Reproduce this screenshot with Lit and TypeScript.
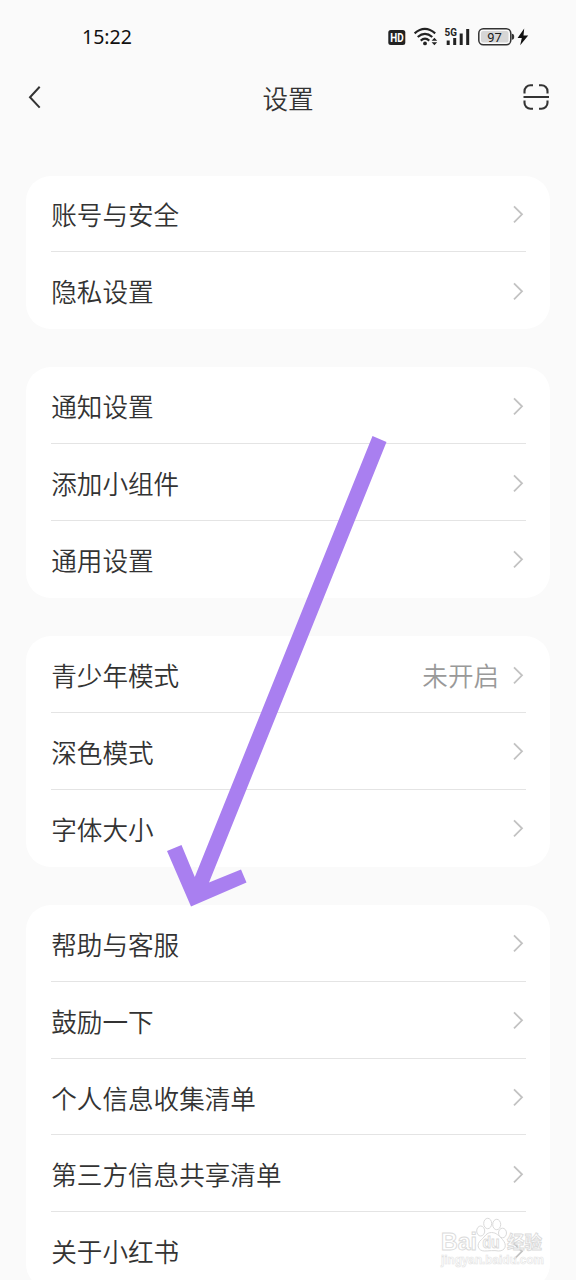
import { LitElement, html, css, svg, nothing } from "lit";
import { customElement, property } from "lit/decorators.js";

interface Item {
  label: string;
  value?: string;
}

const GROUPS: Item[][] = [
  [{ label: "账号与安全" }, { label: "隐私设置" }],
  [{ label: "通知设置" }, { label: "添加小组件" }, { label: "通用设置" }],
  [{ label: "青少年模式", value: "未开启" }, { label: "深色模式" }, { label: "字体大小" }],
  [
    { label: "帮助与客服" },
    { label: "鼓励一下" },
    { label: "个人信息收集清单" },
    { label: "第三方信息共享清单" },
    { label: "关于小红书" },
  ],
];

@customElement("status-bar")
class StatusBar extends LitElement {
  static styles = css`
    :host {
      display: flex;
      justify-content: space-between;
      align-items: center;
      height: 74px;
      padding: 0 46px 0 82px;
      color: #111;
    }
    .time {
      font-family: "Noto Sans", sans-serif;
      font-size: 19.5px;
      font-weight: 450;
      line-height: 24px;
    }
    svg {
      display: block;
      font-family: Roboto, sans-serif;
    }
  `;
  render() {
    return html`
      <span class="time">15:22</span>
      <svg width="142" height="24" viewBox="388 25 142 24">
        <rect x="388.3" y="30" width="17" height="15" rx="2.5" fill="#222" />
        <text x="390.2" y="42" font-size="12.5" font-weight="700" fill="#fff" textLength="13.4" lengthAdjust="spacingAndGlyphs">HD</text>
        <g fill="none" stroke="#222" stroke-width="2.1">
          <path d="M414.6 33.4q10.200-9 20.600 0" />
          <path d="M417.700 37q7.200-6.200 14.600 0" />
          <path d="M420.700 40.600q4.300-3.800 8.600 0" />
        </g>
        <circle cx="425" cy="43.400" r="1.900" fill="#222" />
        <path d="M431.600 40.700l2.800-3 2.800 3zM431.600 42.300l2.800 3 2.800-3z" fill="#222" />
        <text x="444.600" y="36.300" font-size="11" font-weight="700" fill="#222" textLength="12.400" lengthAdjust="spacingAndGlyphs">5G</text>
        <path d="M446.700 40.500h3v4.500h-3zM453.200 38h3v7h-3zM459.700 33.500h3v11.500h-3zM466.200 29h3v16h-3z" fill="#222" />
        <rect x="478.800" y="28.800" width="32" height="16" rx="4.500" fill="#fafafa" stroke="#333" stroke-width="1.500" />
        <rect x="481" y="31" width="27.500" height="11.600" rx="2" fill="#d6d6d6" />
        <path d="M511.800 33.800q2.400 0 2.400 3t-2.400 3z" fill="#333" />
        <text x="494.500" y="41.500" font-size="13" font-weight="400" text-anchor="middle" fill="#222">97</text>
        <path d="M524.200 28.500l-6.600 9.500h4.200l-1.600 7.300 8-9.900h-4.700z" fill="#111" />
      </svg>
    `;
  }
}

@customElement("settings-row")
class SettingsRow extends LitElement {
  @property() label = "";
  @property() value = "";
  static styles = css`
    :host {
      box-sizing: border-box;
      display: flex;
      align-items: center;
      height: 76.8px;
      color: #333;
      font-size: 25.6px;
      line-height: 36px;
    }
    .label {
      flex: 1;
      padding: 1px 0 0 0.6px;
    }
    .value {
      padding-top: 1px;
      margin-right: 12.5px;
      color: #999;
    }
    svg {
      display: block;
      margin-right: 2px;
    }
  `;
  render() {
    return html`
      <span class="label">${this.label}</span>
      ${this.value ? html`<span class="value">${this.value}</span>` : nothing}
      <svg width="12" height="18" viewBox="0 0 12 18">
        <path d="M2 1.300l8 8-8 8" fill="none" stroke="#c2c2c2" stroke-width="1.800" />
      </svg>
    `;
  }
}

@customElement("baidu-mark")
class BaiduMark extends LitElement {
  static styles = css`
    :host,
    svg {
      display: block;
    }
    text {
      fill: #fff;
      stroke: #d2d2d2;
      stroke-width: 0.9px;
      font-family: "Liberation Sans", "Noto Sans CJK SC", sans-serif;
    }
    .url {
      stroke: #dcdcdc;
      stroke-width: 0.6px;
    }
  `;
  render() {
    return html`
      <svg width="110" height="52" viewBox="438 1216 110 52">
        <text x="441" y="1250" font-size="23" font-weight="700" textLength="36" lengthAdjust="spacingAndGlyphs">Bai</text>
        <g fill="#fff" stroke="#d2d2d2" stroke-width="1">
          <path d="M491.500 1232.500c-5 0-6.500 4-10 7-6 5-3.500 11.500 3 11.500 4 0 9.500-1 14 0 7 0 9-6 4-11.500-3.500-3.500-6-7-11-7z" />
          ${[
            [480.700, 1231, 4, 5],
            [487.700, 1223.5, 4, 5.2],
            [496.700, 1224.500, 4, 5.200],
            [502.500, 1233, 4, 4.800],
          ].map(([x, y, rx, ry]) => svg`<ellipse cx=${x} cy=${y} rx=${rx} ry=${ry} />`)}
        </g>
        <text x="482.500" y="1248" font-size="16" font-weight="700" textLength="17" lengthAdjust="spacingAndGlyphs">du</text>
        <text x="507" y="1249" font-size="18" font-weight="700" textLength="35" lengthAdjust="spacingAndGlyphs">经验</text>
        <text class="url" x="441" y="1264" font-size="12" font-weight="700" textLength="103" lengthAdjust="spacingAndGlyphs">jingyan.baidu.com</text>
      </svg>
    `;
  }
}

@customElement("app-root")
class AppRoot extends LitElement {
  static styles = css`
    :host {
      position: relative;
      display: block;
      width: 576px;
      height: 1280px;
      overflow: hidden;
      background: #fafafa;
      color: #333;
      font-family: "Noto Sans CJK SC", sans-serif;
      font-weight: 350;
    }
    .header {
      display: grid;
      grid-template-columns: 32px 1fr 32px;
      align-items: center;
      height: 46px;
      padding: 0 24px 0 22px;
    }
    .header svg {
      display: block;
    }
    .title {
      text-align: center;
      font-size: 25.600px;
      line-height: 36px;
      padding: 1px 0 0 2px;
    }
    .groups {
      display: flex;
      flex-direction: column;
      gap: 38.400px;
      padding: 55.500px 25.600px 0;
    }
    .card {
      background: #fff;
      border-radius: 25px;
      padding: 0 24.800px 0 25px;
    }
    .line {
      height: 1px;
      margin: -1px 0 0 0;
      background: #e4e4e4;
    }
    .arrow {
      position: absolute;
      left: 0;
      top: 0;
    }
    .mark {
      position: absolute;
      left: 438px;
      top: 1216px;
      opacity: 0.8;
    }
  `;
  render() {
    return html`
      <status-bar></status-bar>
      <div class="header">
        <svg width="32" height="32" viewBox="22 81 32 32">
          <path d="M39.700 86.800L30 97.200l9.700 10.400" fill="none" stroke="#333" stroke-width="2" />
        </svg>
        <span class="title">设置</span>
        <svg width="32" height="32" viewBox="520 81 32 32">
          <path
            d="M524.500 93.500v-2.300a6 6 0 0 1 6-6h2.500M539 85.200h2.500a6 6 0 0 1 6 6v2.300M547.500 100.500v2.300a6 6 0 0 1-6 6h-2.500M533 108.800h-2.500a6 6 0 0 1-6-6v-2.300M523.500 97h25.500"
            fill="none"
            stroke="#333"
            stroke-width="2.100"
          />
        </svg>
      </div>
      <div class="groups">
        ${GROUPS.map(
          (items) => html`<div class="card">
            ${items.map(
              (item, i) => html`
                ${i ? html`<div class="line"></div>` : nothing}
                <settings-row .label=${item.label} .value=${item.value ?? ""}></settings-row>
              `
            )}
          </div>`
        )}
      </div>
      <baidu-mark class="mark"></baidu-mark>
      <svg class="arrow" width="576" height="1280" viewBox="0 0 576 1280">
        <path d="M372.500 436L386.500 442 209 882.500 241 869.500 246.500 882.500 191 906.500 167 851 181.500 845 194.800 877z" fill="#a97ff0" />
      </svg>
    `;
  }
}
